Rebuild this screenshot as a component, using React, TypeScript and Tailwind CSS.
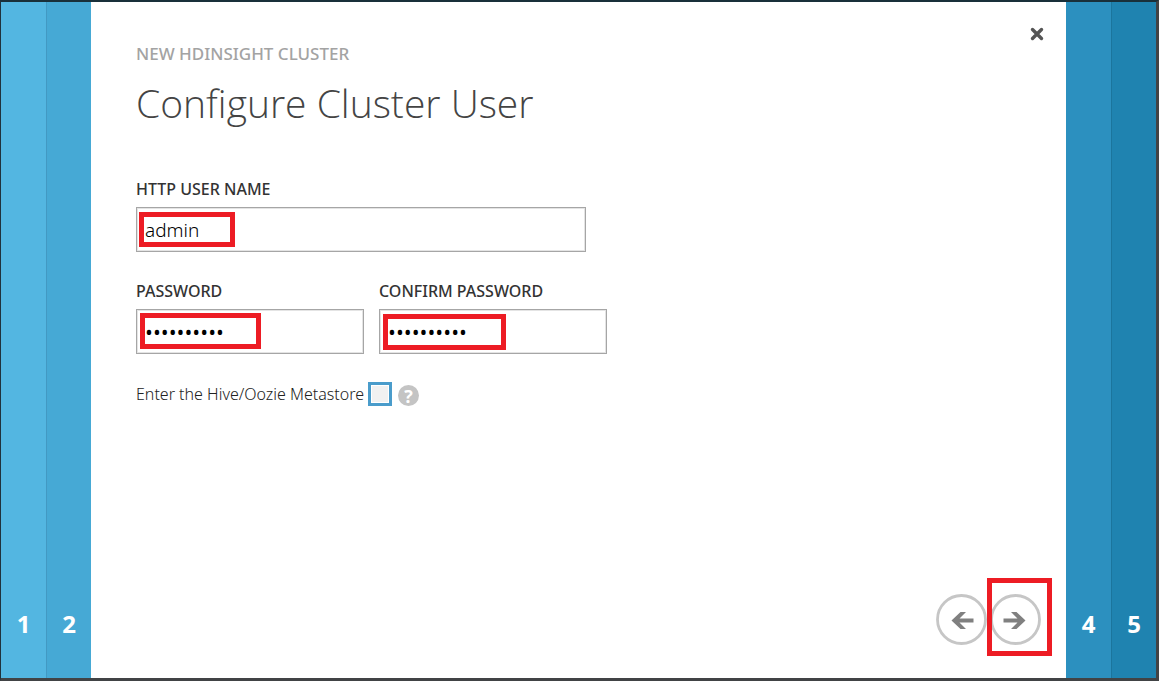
import { useState } from "react";
import type { InputHTMLAttributes } from "react";

function Step({ label, className }: { label: string; className: string }) {
  return (
    <button
      type="button"
      className={`flex w-[45px] shrink-0 items-end justify-center pb-[38px] text-2xl leading-8 font-bold text-white ${className}`}
    >
      {label}
    </button>
  );
}

type FieldProps = InputHTMLAttributes<HTMLInputElement> & {
  id: string;
  label: string;
  inputClass: string;
  markClass: string;
};

function Field({ id, label, className = "", inputClass, markClass, ...rest }: FieldProps) {
  return (
    <div className={className}>
      <label htmlFor={id} className="block font-['Noto_Sans','Open_Sans',sans-serif] text-base leading-6 font-medium text-[#333]">
        {label}
      </label>
      <div className="relative mt-1.5">
        <input
          id={id}
          className={`block h-[45px] w-full border border-[#a6a6a6] bg-white px-2 text-black shadow-[inset_0_0_0_1px_#e4e4e4] outline-none ${inputClass}`}
          {...rest}
        />
        <span className={`pointer-events-none absolute border-5 border-[#ed1c24] ${markClass}`} />
      </div>
    </div>
  );
}

function Arrow({ back = false }: { back?: boolean }) {
  return (
    <svg viewBox="0 0 51 51" className="block size-[51px]" aria-hidden="true">
      <circle cx="25.5" cy="25.5" r="24" fill="#fff" stroke="#c6c6c6" strokeWidth="2.8" />
      <g transform={back ? "translate(53 0) scale(-1 1)" : "translate(-2 0)"}>
        <path d="M15.5 24.5H29.5L23 18H28.5L37.5 26.5L28.5 35H23L29.5 28.5H15.5Z" fill="#808080" />
      </g>
    </svg>
  );
}

export default function App() {
  const [user, setUser] = useState("admin");
  const [password, setPassword] = useState("abcdefghij");
  const [confirm, setConfirm] = useState("abcdefghij");
  const [metastore, setMetastore] = useState(false);

  return (
    <div className="flex min-h-screen border-t-2 border-r-3 border-b-3 border-l border-t-[#19303a] border-r-[#414345] border-b-[#414345] border-l-[#20323c] bg-white font-['Open_Sans','Noto_Sans',sans-serif]">
      <nav aria-label="Previous steps" className="flex shrink-0">
        <Step label="1" className="bg-[#53b6e1]" />
        <Step label="2" className="border-l border-[#4299c3] bg-[#46a9d5]" />
      </nav>

      <main className="relative flex min-w-0 flex-1 flex-col pt-10 pr-3.5 pb-[22px] pl-[45px]">
        <button type="button" aria-label="Close" className="absolute top-[23px] right-5 p-0.5">
          <svg viewBox="0 0 14 14" className="block size-3.5" aria-hidden="true">
            <path d="M2.5 2.5L11.5 11.5M11.5 2.5L2.5 11.5" stroke="#555" strokeWidth="3.4" strokeLinecap="round" />
          </svg>
        </button>

        <p className="font-['Noto_Sans','Open_Sans',sans-serif] text-[17px] leading-6 font-medium text-[#a3a3a3]">
          NEW HDINSIGHT CLUSTER
        </p>
        <h1 className="mt-[9px] text-[39px] leading-14 font-light text-[#444]">Configure Cluster User</h1>

        <form className="mt-[46px]" onSubmit={(e) => e.preventDefault()}>
          <Field
            id="user"
            label="HTTP USER NAME"
            className="max-w-[450px]"
            inputClass="font-['Noto_Sans','Open_Sans',sans-serif] text-[19px] font-light"
            markClass="top-[5px] left-[3px] h-[35px] w-24"
            value={user}
            onChange={(e) => setUser(e.target.value)}
          />
          <div className="mt-[27px] flex gap-[15px]">
            <Field
              id="password"
              type="password"
              label="PASSWORD"
              className="w-[228px]"
              inputClass="text-[21px]"
              markClass="top-1 left-1 h-9 w-[121px]"
              value={password}
              onChange={(e) => setPassword(e.target.value)}
            />
            <Field
              id="confirm"
              type="password"
              label="CONFIRM PASSWORD"
              className="w-[228px]"
              inputClass="text-[21px]"
              markClass="top-[5px] left-1 h-9 w-[123px]"
              value={confirm}
              onChange={(e) => setConfirm(e.target.value)}
            />
          </div>
          <div className="mt-[27px] flex items-center">
            <label htmlFor="metastore" className="font-['Noto_Sans','Open_Sans',sans-serif] text-base leading-6 font-light text-[#222]">
              Enter the Hive/Oozie Metastore
            </label>
            <input
              id="metastore"
              type="checkbox"
              checked={metastore}
              onChange={(e) => setMetastore(e.target.checked)}
              className="ml-1 size-6 appearance-none border-3 border-[#4a9ccb] bg-[#f1f1f1] shadow-[inset_0_0_0_1px_#fff] checked:bg-[#4a9ccb]"
            />
            <button
              type="button"
              aria-label="Help"
              className="mt-1 ml-1.5 flex size-[21px] items-center justify-center rounded-full bg-[#c4c4c4] text-lg leading-5 font-bold text-white"
            >
              ?
            </button>
          </div>
        </form>

        <div className="mt-auto flex justify-end">
          <button type="button" aria-label="Back" className="self-center pt-1">
            <Arrow back />
          </button>
          <button type="button" aria-label="Next" className="relative flex h-[78px] w-[65px] items-center pt-1 pl-[3px]">
            <Arrow />
            <span className="pointer-events-none absolute inset-0 border-5 border-[#ed1c24]" />
          </button>
        </div>
      </main>

      <nav aria-label="Next steps" className="flex shrink-0">
        <Step label="4" className="bg-[#2c90bf]" />
        <Step label="5" className="border-l border-[#1b759d] bg-[#1f83b0]" />
      </nav>
    </div>
  );
}
